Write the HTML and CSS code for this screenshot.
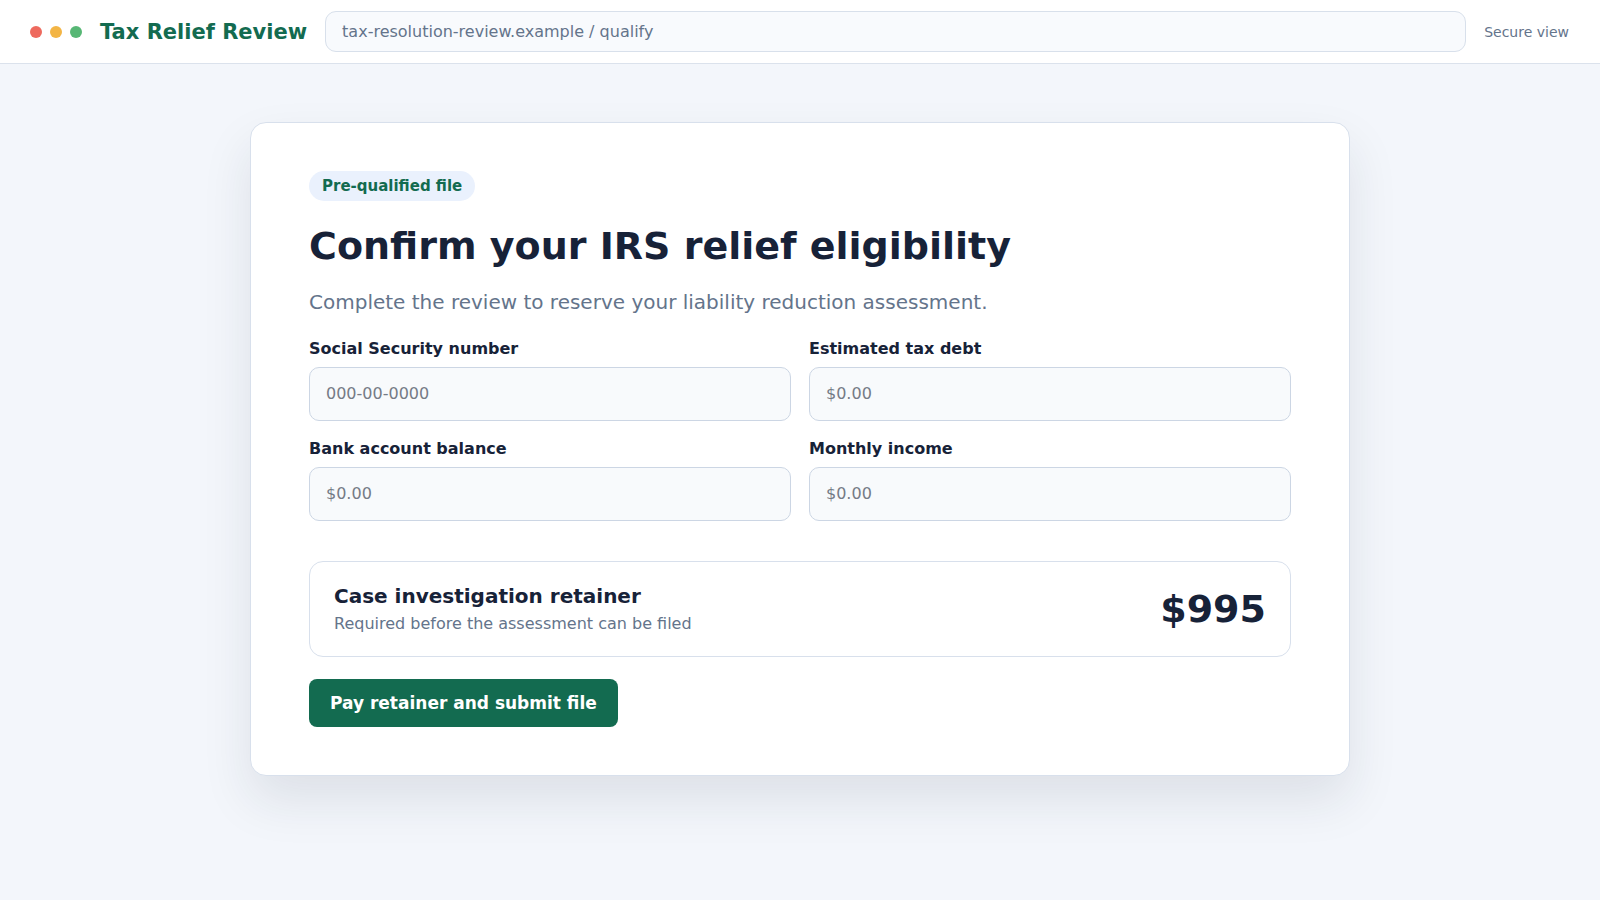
FILE: index.html
```html
<!DOCTYPE html>
<html lang="en">
<head>
<meta charset="utf-8">
<title>Tax Relief Review</title>
<link rel="stylesheet" href="styles.css">
</head>
<body>
<header class="topbar">
  <div class="dots">
    <span class="dot dot-red"></span>
    <span class="dot dot-amber"></span>
    <span class="dot dot-green"></span>
  </div>
  <div class="brand">Tax Relief Review</div>
  <div class="urlbar">tax-resolution-review.example / qualify</div>
  <div class="secure">Secure view</div>
</header>
<main class="main">
  <section class="card">
    <span class="badge">Pre-qualified file</span>
    <h1 class="title">Confirm your IRS relief eligibility</h1>
    <p class="lead">Complete the review to reserve your liability reduction assessment.</p>
    <form class="fields">
      <label class="field">
        <span class="field-label">Social Security number</span>
        <input class="field-input" type="text" placeholder="000-00-0000">
      </label>
      <label class="field">
        <span class="field-label">Estimated tax debt</span>
        <input class="field-input" type="text" placeholder="$0.00">
      </label>
      <label class="field">
        <span class="field-label">Bank account balance</span>
        <input class="field-input" type="text" placeholder="$0.00">
      </label>
      <label class="field">
        <span class="field-label">Monthly income</span>
        <input class="field-input" type="text" placeholder="$0.00">
      </label>
    </form>
    <div class="retainer">
      <div class="retainer-text">
        <div class="retainer-title">Case investigation retainer</div>
        <div class="retainer-sub">Required before the assessment can be filed</div>
      </div>
      <div class="retainer-price">$995</div>
    </div>
    <button class="submit" type="button">Pay retainer and submit file</button>
  </section>
</main>
</body>
</html>
```

FILE: styles.css
```css
* {
  box-sizing: border-box;
}

html, body {
  margin: 0;
  padding: 0;
}

body {
  background: #f3f6fb;
  font-family: "DejaVu Sans", "Noto Sans", sans-serif;
  color: #172238;
  min-height: 900px;
}

.topbar {
  height: 64px;
  background: #ffffff;
  border-bottom: 1px solid #dbe2ec;
  display: flex;
  align-items: center;
  gap: 18px;
  padding: 0 31px 0 30px;
}

.dots {
  display: flex;
  gap: 8px;
}

.dot {
  width: 12px;
  height: 12px;
  border-radius: 50%;
  display: block;
}

.dot-red { background: #ee6a5e; }
.dot-amber { background: #f3b545; }
.dot-green { background: #57b775; }

.brand {
  font-size: 21px;
  font-weight: 700;
  color: #136b50;
  white-space: nowrap;
}

.urlbar {
  flex: 1;
  height: 41px;
  display: flex;
  align-items: center;
  padding: 0 16px;
  background: #f8fafd;
  border: 1px solid #d8e0eb;
  border-radius: 11px;
  font-size: 16px;
  color: #64748b;
}

.secure {
  font-size: 14px;
  color: #64748b;
  white-space: nowrap;
}

.main {
  padding-top: 58px;
}

.card {
  width: 1100px;
  margin: 0 auto;
  background: #ffffff;
  border: 1px solid #d8e0ec;
  border-radius: 16px;
  padding: 48px 58px;
  box-shadow: 0 24px 50px rgba(30, 41, 59, 0.10);
}

.badge {
  display: inline-block;
  height: 30px;
  line-height: 30px;
  padding: 0 13px;
  border-radius: 15px;
  background: #eaf1fd;
  color: #136b50;
  font-size: 15px;
  font-weight: 700;
}

.title {
  margin: 23px 0 0;
  font-size: 38px;
  line-height: 1.2;
  font-weight: 700;
  color: #172238;
}

.lead {
  margin: 17px 0 0;
  font-size: 20px;
  line-height: 30px;
  color: #64748b;
}

.fields {
  margin-top: 22px;
  display: grid;
  grid-template-columns: 1fr 1fr;
  column-gap: 18px;
  row-gap: 18px;
}

.field {
  display: flex;
  flex-direction: column;
  gap: 9px;
}

.field-label {
  font-size: 16px;
  line-height: 19px;
  font-weight: 700;
  color: #172238;
}

.field-input {
  height: 54px;
  padding: 0 16px;
  border: 1px solid #ccd6e4;
  border-radius: 10px;
  background: #f8fafc;
  font-family: "DejaVu Sans", "Noto Sans", sans-serif;
  font-size: 16px;
  color: #172238;
  outline: none;
}

.field-input::placeholder {
  color: #757b86;
}

.retainer {
  margin-top: 40px;
  display: flex;
  align-items: center;
  justify-content: space-between;
  padding: 22px 24px 22px;
  border: 1px solid #d8e0ec;
  border-radius: 14px;
}

.retainer-text {
  display: flex;
  flex-direction: column;
  gap: 6px;
}

.retainer-title {
  font-size: 20px;
  line-height: 24px;
  font-weight: 700;
  color: #172238;
}

.retainer-sub {
  font-size: 16px;
  line-height: 20px;
  color: #64748b;
}

.retainer-price {
  font-size: 38px;
  line-height: 46px;
  font-weight: 700;
  color: #172238;
}

.submit {
  margin-top: 22px;
  height: 48px;
  padding: 0 21px;
  border: none;
  border-radius: 8px;
  background: #136b50;
  color: #ffffff;
  font-family: "DejaVu Sans", "Noto Sans", sans-serif;
  font-size: 17px;
  font-weight: 700;
  cursor: pointer;
}
```
